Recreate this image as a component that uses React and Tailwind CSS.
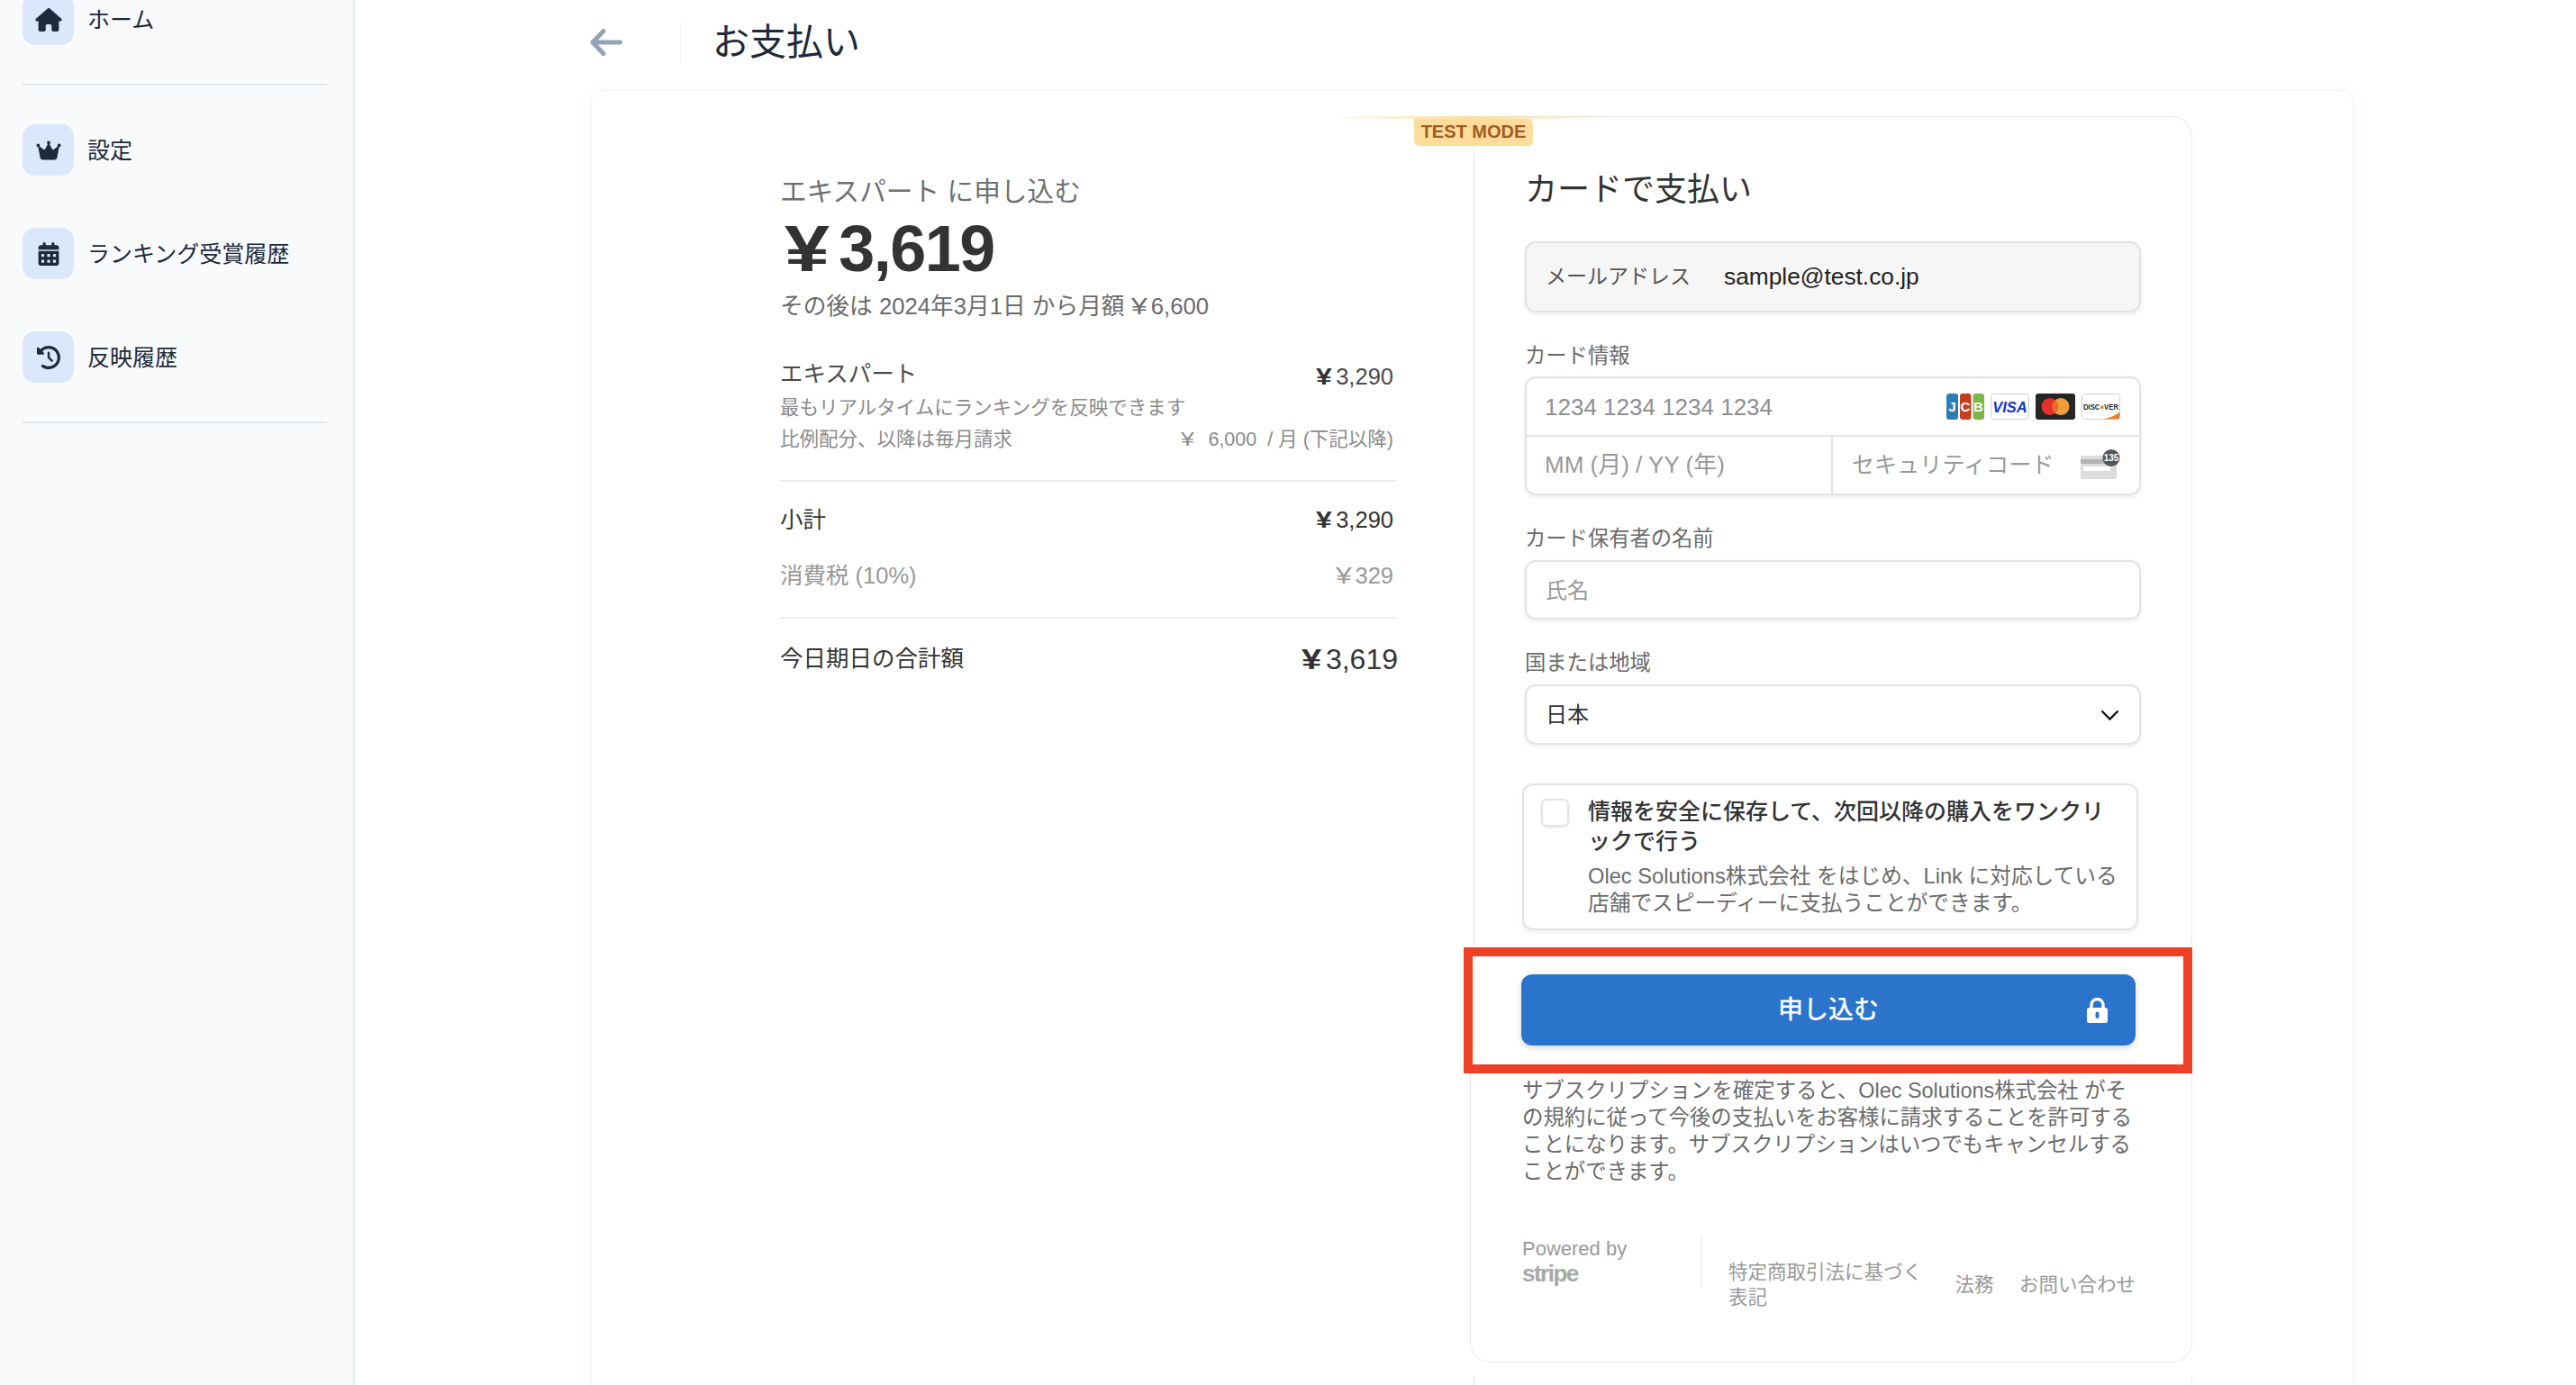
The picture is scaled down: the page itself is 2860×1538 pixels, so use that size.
import React from 'react'
import {FaCalendarDays, FaClockRotateLeft, FaCrown, FaHouse} from 'react-icons/fa6'

const Yen = ({className = ""}) => <span className={`inline-block origin-left scale-x-[1.25] mr-[0.3em] ${className}`}>¥</span>

const NavItem = ({icon, label}) => {
    return <div className="flex items-center h-[57px]">
        <div className="w-[57px] h-[57px] rounded-[14px] bg-[#dbe8fb] flex items-center justify-center text-[#1e293b]">
            {icon}
        </div>
        <span className="ml-[15px] text-[25px] leading-8 text-[#1e293b]">{label}</span>
    </div>
}

const Sidebar = () => {
    return <aside className="w-[394px] shrink-0 h-full bg-[#f8fafc] border-r-2 border-[#e2e8f0] pl-[25px] pr-[29px]">
        <div className="-mt-[7px]">
            <NavItem icon={<FaHouse className="w-[30px] h-[26px]"/>} label="ホーム"/>
        </div>
        <hr className="mt-[43px] border-t-2 border-[#e2e8f0]"/>
        <div className="mt-[43px] flex flex-col gap-[58px]">
            <NavItem icon={<FaCrown className="w-[30px] h-[24px]"/>} label="設定"/>
            <NavItem icon={<FaCalendarDays className="w-[24px] h-[26px]"/>} label="ランキング受賞履歴"/>
            <NavItem icon={<FaClockRotateLeft className="w-[26px] h-[26px]"/>} label="反映履歴"/>
        </div>
        <hr className="mt-[43px] border-t-2 border-[#e2e8f0]"/>
    </aside>
}

const Summary = () => {
    return <div className="w-[684px] ml-[209px] shrink-0">
        <div className="mt-[64px] text-[29.7px] leading-10 text-[#707070]">エキスパート に申し込む</div>
        <div className="mt-[3px] pl-[5px] text-[72px] leading-[80px] font-bold tracking-[-1.5px] text-[#333]"><Yen/>3,619</div>
        <div className="mt-[6px] text-[25.7px] leading-9 text-[#6b6b6b]">その後は 2024年3月1日 から月額 <Yen/>6,600</div>
        <div className="mt-[39px] flex justify-between text-[#4a4a4a]">
            <span className="text-[25.5px] leading-9">エキスパート</span>
            <span className="text-[25.5px] leading-9 mt-[3px] mr-[3px]"><Yen className="font-bold text-[#333]"/>3,290</span>
        </div>
        <div className="mt-[2px] text-[21.5px] leading-[30px] text-[#8a8a8a]">最もリアルタイムにランキングを反映できます</div>
        <div className="mt-[5px] flex justify-between text-[21.5px] leading-[30px] text-[#8a8a8a]">
            <span>比例配分、以降は毎月請求</span>
            <span className="mr-[3px]"><Yen/><span className="ml-[12px]">6,000</span><span className="ml-[12px]">/ 月 (下記以降)</span></span>
        </div>
        <hr className="mt-[30px] border-t-2 border-[#ececec]"/>
        <div className="mt-[24px] flex justify-between text-[25.5px] leading-9 text-[#333]">
            <span>小計</span>
            <span className="mr-[3px]"><Yen className="font-bold"/>3,290</span>
        </div>
        <div className="mt-[26px] flex justify-between text-[25.5px] leading-9 text-[#999]">
            <span>消費税 (10%)</span>
            <span className="mr-[3px]"><Yen/>329</span>
        </div>
        <hr className="mt-[28px] border-t-2 border-[#ececec]"/>
        <div className="mt-[23px] flex justify-between items-center text-[#333]">
            <span className="text-[25.5px] leading-9">今日期日の合計額</span>
            <span className="text-[32px] leading-10 mt-[2px] -mr-[2px]"><Yen className="font-bold"/>3,619</span>
        </div>
    </div>
}

const CardLogos = () => {
    return <div className="flex gap-[7px]">
        <svg width="42" height="29" viewBox="0 0 42 29">
            <rect x="0" width="13" height="29" rx="3" fill="#2e7cb5"/>
            <rect x="15" width="12.5" height="29" rx="3" fill="#c43e1f"/>
            <rect x="29.5" width="12.5" height="29" rx="3" fill="#7ab648"/>
            <text x="6.5" y="20" fontSize="15" fontWeight="700" fill="#fff" textAnchor="middle">J</text>
            <text x="21" y="20" fontSize="15" fontWeight="700" fill="#fff" textAnchor="middle">C</text>
            <text x="35.5" y="20" fontSize="15" fontWeight="700" fill="#fff" textAnchor="middle">B</text>
        </svg>
        <svg width="43" height="29" viewBox="0 0 43 29">
            <rect x="0.5" y="0.5" width="42" height="28" rx="3" fill="#fff" stroke="#cfcfcf"/>
            <text x="21.5" y="20.5" fontSize="16.5" fontWeight="700" fontStyle="italic" fill="#1434cb" textAnchor="middle">VISA</text>
        </svg>
        <svg width="44" height="29" viewBox="0 0 44 29">
            <rect width="44" height="29" rx="3" fill="#252525"/>
            <circle cx="16" cy="14.5" r="9.5" fill="#e2302b"/>
            <circle cx="28" cy="14.5" r="9.5" fill="#ed9f3a"/>
            <path d="M22 7.1a9.5 9.5 0 0 1 0 14.8a9.5 9.5 0 0 1 0-14.8z" fill="#eb6d2a"/>
        </svg>
        <svg width="43" height="29" viewBox="0 0 43 29">
            <rect x="0.5" y="0.5" width="42" height="28" rx="3" fill="#fff" stroke="#cfcfcf"/>
            <path d="M24 28.5C32 27 38 24 42.5 20.5V25.5a3 3 0 0 1-3 3z" fill="#e8802e"/>
            <text x="21.5" y="17.5" fontSize="9" fontWeight="700" fill="#222" textAnchor="middle" textLength="39" lengthAdjust="spacingAndGlyphs">DISC<tspan fill="#e8802e">●</tspan>VER</text>
        </svg>
    </div>
}

const CvcIcon = () => {
    return <svg width="50" height="36" viewBox="0 0 50 36">
        <rect x="0" y="7" width="40" height="26" rx="2" fill="#dcdcdc"/>
        <rect x="0" y="11" width="40" height="5" fill="#b3b3b3"/>
        <rect x="3" y="19" width="30" height="5" fill="#fff"/>
        <circle cx="34" cy="9.5" r="9.5" fill="#555"/>
        <text x="34" y="13" fontSize="10" fontWeight="700" fill="#fff" textAnchor="middle">135</text>
    </svg>
}

const LockIcon = () => {
    return <svg width="25" height="28" viewBox="0 0 25 28">
        <path d="M6 12V8a6.5 6.5 0 0 1 13 0v4" fill="none" stroke="#fff" strokeWidth="3.4"/>
        <rect x="1" y="11" width="23" height="17" rx="2.5" fill="#fff"/>
        <rect x="10.5" y="15.5" width="4" height="7.5" rx="2" fill="#2b74cc"/>
    </svg>
}

const inputBox = "border-2 border-[#e3e3e3] rounded-[12px] shadow-[0_2px_5px_rgba(0,0,0,0.08)]"

const Payment = () => {
    return <div className="ml-[86px] shrink-0 w-[798px]">
        <div className="relative h-[1063px] border-x border-t border-[#e8e8e8] rounded-t-[22px] pt-[56px] px-[56px]">
            <div className="absolute -top-px -left-[161px] w-[317px] h-[3px] bg-gradient-to-r from-transparent via-[#fddc9c] to-transparent"></div>
            <div className="absolute top-[2px] -left-[67px] w-[132px] h-[30px] pb-[2px] rounded-b-[6px] rounded-tr-[6px] bg-[#fddc9c] flex items-center justify-center text-[20px] leading-none font-bold text-[#a65a1f]">
                TEST MODE
            </div>

            <div className="text-[36px] leading-[50px] text-[#333]">カードで支払い</div>

            <div className={`mt-[32px] h-[79px] bg-[#f6f6f6] flex items-center pl-[21px] text-[23px] ${inputBox}`}>
                <span className="text-[#555] w-[198px]">メールアドレス</span>
                <span className="text-[26.3px] text-[#222]">sample@test.co.jp</span>
            </div>

            <div className="mt-[32px] text-[23.3px] leading-8 text-[#6b6b6b]">カード情報</div>
            <div className={`mt-[7px] h-[132px] flex flex-col ${inputBox}`}>
                <div className="h-[65px] flex items-center justify-between pl-[20px] pr-[21px] border-b-2 border-[#e3e3e3]">
                    <span className="text-[26px] pt-[2px] text-[#8f8f8f]">1234 1234 1234 1234</span>
                    <CardLogos/>
                </div>
                <div className="flex-1 flex">
                    <div className="w-[340px] border-r-2 border-[#e3e3e3] flex items-center pl-[20px] text-[26px] text-[#999]">
                        MM (月) / YY (年)
                    </div>
                    <div className="flex-1 flex items-center justify-between pl-[21px] pr-[15px] text-[25.1px] text-[#999]">
                        <span>セキュリティコード</span>
                        <CvcIcon/>
                    </div>
                </div>
            </div>

            <div className="mt-[32px] text-[23.3px] leading-8 text-[#6b6b6b]">カード保有者の名前</div>
            <div className={`mt-[8px] h-[66px] flex items-center px-[21px] pt-[2px] text-[24px] text-[#999] ${inputBox}`}>氏名</div>

            <div className="mt-[32px] text-[23.3px] leading-8 text-[#6b6b6b]">国または地域</div>
            <div className={`mt-[8px] h-[67px] flex items-center justify-between pl-[21px] pr-[22px] text-[24px] text-[#333] ${inputBox}`}>
                <span>日本</span>
                <svg width="21" height="12" viewBox="0 0 21 12"><path d="M1.5 1.5L10.5 10.5L19.5 1.5" fill="none" stroke="#111" strokeWidth="2.4"/></svg>
            </div>

            <div className={`mt-[43px] -ml-[3px] w-[684px] h-[163px] flex pl-[19px] pr-[14px] pt-[13px] ${inputBox}`}>
                <div className="w-[31px] h-[31px] mt-[2px] shrink-0 rounded-[6px] border-2 border-[#e3e3e3] shadow-[0_1px_3px_rgba(0,0,0,0.1)]"></div>
                <div className="ml-[21px]">
                    <div className="text-[25px] leading-[33px] font-medium text-[#333]">情報を安全に保存して、次回以降の購入をワンクリックで行う</div>
                    <div className="mt-[7px] text-[23.7px] leading-[30px] text-[#6b6b6b]">Olec Solutions株式会社 をはじめ、Link に対応している店舗でスピーディーに支払うことができます。</div>
                </div>
            </div>

            <button className="relative mt-[49px] -ml-[4px] w-[682px] h-[79px] rounded-[12px] bg-[#2b74cc] shadow-[0_3px_6px_rgba(0,0,0,0.15)] text-[28px] font-medium text-white flex items-center justify-center">
                申し込む
                <span className="absolute right-[30px] top-[26px]"><LockIcon/></span>
            </button>

            <hr className="mt-[16px] -ml-[3px] w-[680px] border-t-2 border-[#f5f5f5]"/>

            <div className="absolute top-[922px] -left-[12px] w-[809px] h-[140px] border-[10px] border-[#ee4026]"></div>
        </div>

        <div className="-ml-[4px] h-[321px] border-x border-b border-[#e8e8e8] rounded-b-[22px] pt-[4px] pl-[57px] pr-[60px]">
            <div className="w-[680px] text-[23.4px] leading-[30px] text-[#6b6b6b]">
                サブスクリプションを確定すると、Olec Solutions株式会社 がその規約に従って今後の支払いをお客様に請求することを許可することになります。サブスクリプションはいつでもキャンセルすることができます。
            </div>
            <div className="mt-[56px] flex items-start w-[681px]">
                <div className="w-[200px] h-[58px] border-r border-[#e8e8e8]">
                    <div className="text-[22px] leading-[29px] text-[#9a9a9a]">Powered by</div>
                    <div className="text-[26px] leading-[26px] font-bold tracking-[-1.5px] text-[#a8a8a8]">stripe</div>
                </div>
                <div className="flex-1 ml-[29px] mt-[27px] flex items-center justify-between text-[21.5px] leading-[28px] text-[#999]">
                    <span className="w-[218px]">特定商取引法に基づく表記</span>
                    <span className="ml-[33px]">法務</span>
                    <span className="ml-[28px]">お問い合わせ</span>
                </div>
            </div>
        </div>
        <div className="mt-[15px] h-[40px] border-x border-[#e8e8e8]"></div>
    </div>
}

const App = () => {
    return <div className="w-[2860px] h-[1538px] overflow-hidden flex bg-white [font-family:'Liberation_Sans','Noto_Sans_CJK_JP',sans-serif]">
        <Sidebar/>
        <main className="flex-1 pl-[262px]">
            <div className="h-[100px] flex items-center">
                <svg className="-mt-[6px] -ml-px" width="36" height="30" viewBox="0 0 36 30">
                    <path d="M33.5 15H3M15 2.5L3 15L15 27.5" fill="none" stroke="#94a3b8" strokeWidth="5" strokeLinecap="round" strokeLinejoin="round"/>
                </svg>
                <div className="ml-[64px] h-[49px] -mt-[6px] border-l border-[#f1f5f9]"></div>
                <h1 className="ml-[35px] -mt-[4px] text-[41px] text-[#1e293b]">お支払い</h1>
            </div>
            <div className="w-[1957px] h-[1500px] bg-white border border-[#f1f5f9] rounded-t-[14px] shadow-[0_0_18px_8px_rgba(0,0,0,0.012)] pt-[28px] flex items-start">
                <Summary/>
                <Payment/>
            </div>
        </main>
    </div>
}

export default App
